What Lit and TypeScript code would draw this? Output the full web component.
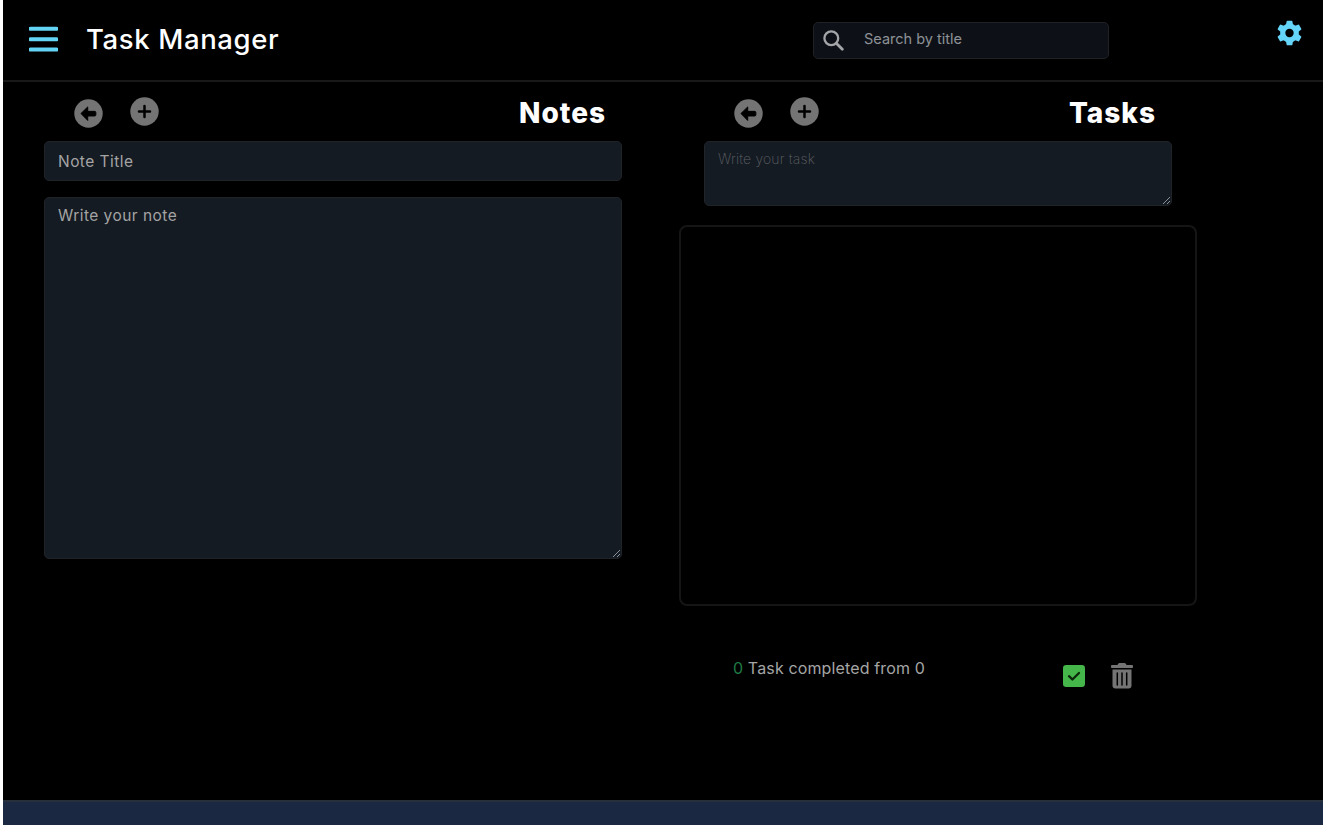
import { LitElement, html, css, svg } from "lit";
import { customElement, state } from "lit/decorators.js";

const backIcon = html`<svg class="round" viewBox="0 0 30 30" aria-hidden="true">
  <circle cx="15" cy="15" r="14.7" fill="#747474" />
  <path d="M7.2 15 14.2 8.2V12.8H21.3Q22.6 12.8 22.6 14V16.4Q22.6 17.6 21.3 17.6H14.2V22.2Z"
    fill="#000" stroke="#000" stroke-width="1" stroke-linejoin="round" />
</svg>`;

const addIcon = html`<svg class="round" viewBox="0 0 30 30" aria-hidden="true">
  <circle cx="15" cy="15" r="14.7" fill="#747474" />
  <path d="M15 9.3V20.7M9.3 15H20.7" fill="none" stroke="#000" stroke-width="2.6" stroke-linecap="round" />
</svg>`;

const grip = html`<svg class="grip" viewBox="0 0 9 9" aria-hidden="true">
  <path d="M1 8 8 1M5 8 8 5" stroke="#8b9096" stroke-width="1" fill="none" />
</svg>`;

const teeth = [0, 60, 120, 180, 240, 300].map(
  (a) => svg`<path d="M-3.6 -8 -2.8 -12Q-2.6 -12.3 -2 -12.3H2Q2.6 -12.3 2.8 -12L3.6 -8Z" transform="rotate(${a})" />`
);

@customElement("app-root")
export class AppRoot extends LitElement {
  @state() private done = 0;
  @state() private total = 0;

  static styles = css`
    :host {
      display: block;
      height: 825px;
      padding: 0 3px;
      box-sizing: border-box;
      overflow: hidden;
      background: #fff;
      font-family: Inter, "Liberation Sans", sans-serif;
      color: #fff;
    }
    * { box-sizing: border-box; }
    svg { display: block; }
    button { background: none; border: 0; padding: 0; margin: 0; }
    h1, h2, p { margin: 0; }
    .app { display: flex; flex-direction: column; height: 100%; background: #000; }
    header {
      display: flex;
      align-items: flex-start;
      height: 82px;
      border-bottom: 2px solid #191919;
    }
    .menu { margin: 26px 0 0 26px; }
    .menu svg { width: 29px; height: 26px; }
    h1 { margin: 22px 0 0 28px; width: 240px; font-size: 27.5px; line-height: 34px; font-weight: 500; letter-spacing: 0.62px; white-space: nowrap; }
    .search {
      display: flex;
      align-items: center;
      width: 296px;
      height: 37px;
      margin: 22px 0 0 auto;
      padding: 0 0 2px 9px;
      background: #0d1117;
      border: 1px solid #1f2124;
      border-radius: 5px;
    }
    .search svg { width: 21px; height: 21px; margin-top: 1px; }
    .search input { flex: 1; min-width: 0; margin: 0 0 2px 20px; font-size: 14.5px; letter-spacing: 0; }
    .settings { margin: 20px 21px 0 168px; }
    .settings svg { width: 25px; height: 26px; }
    input, textarea {
      display: block;
      background: none;
      border: 0;
      padding: 0;
      margin: 0;
      outline: 0;
      resize: none;
      color: #ddd;
      font-family: inherit;
    }
    ::placeholder { color: #a4a4a4; opacity: 1; }
    .search ::placeholder { color: #8e9196; }
    main { display: flex; flex: 1; align-items: flex-start; padding-left: 41px; }
    .notes { width: 578px; }
    .tasks { width: 517px; margin-left: 57px; }
    .bar { display: flex; align-items: flex-start; height: 59px; padding: 14px 16px 0 30px; }
    .bar button { margin-top: 3px; }
    .bar button + button { margin: 1px 0 0 27px; }
    .round { width: 29px; height: 29px; }
    h2 { margin-left: auto; font-size: 28px; line-height: 34px; font-weight: 800; letter-spacing: 1px; }
    .tasks .bar { padding: 14px 40px 0 55px; }
    .field { position: relative; background: #151b23; border: 1px solid #202429; border-radius: 5px; padding: 0 13px; }
    .field input, .field textarea { width: 100%; height: 100%; font-size: 15.5px; letter-spacing: 0.45px; }
    .title { height: 40px; }
    .body { height: 362px; margin-top: 16px; }
    .field textarea { padding-top: 8px; line-height: 20px; }
    .entry { height: 65px; margin: 0 24px 0 25px; }
    .field.entry textarea { padding-top: 7px; font-size: 14px; font-weight: 200; letter-spacing: 0.15px; }
    .entry ::placeholder { color: #5d6064; }
    .grip { position: absolute; right: 0; bottom: 0; width: 9px; height: 9px; }
    .list { height: 381px; margin: 19px -1px 0 0; border: 2px solid #151515; border-radius: 8px; }
    .status { display: flex; align-items: flex-start; margin-top: 50px; padding-left: 54px; }
    .status p { width: 330px; font-size: 16px; line-height: 24px; letter-spacing: 0.14px; color: #a5a5a5; white-space: nowrap; }
    .done { color: #1f7a45; }
    .complete svg { width: 22px; height: 22px; margin-top: 9px; }
    .remove svg { width: 22px; height: 26px; margin: 7px 0 0 26px; }
    footer { height: 25px; background: #1a2842; border-top: 2px solid #272f3b; }
  `;

  render() {
    return html`
      <div class="app">
        <header>
          <button class="menu" aria-label="Menu">
            <svg viewBox="0 0 29 26">
              <path d="M1.5 2.8H27.5M1.5 13.2H27.5M1.5 23.6H27.5" stroke="#64d4f4" stroke-width="4" stroke-linecap="round" />
            </svg>
          </button>
          <h1>Task Manager</h1>
          <label class="search">
            <svg viewBox="0 0 21 21">
              <circle cx="8.3" cy="8.3" r="6.9" fill="none" stroke="#a3a5a8" stroke-width="2.3" />
              <path d="M13.3 13.3 19.3 19.3" stroke="#a3a5a8" stroke-width="2.8" stroke-linecap="round" />
            </svg>
            <input type="text" placeholder="Search by title" />
          </label>
          <button class="settings" aria-label="Settings">
            <svg viewBox="-12.5 -13 25 26">
              <g fill="#64d4f8">${teeth}<circle r="9.4" /></g>
              <circle r="4.2" fill="#000" />
            </svg>
          </button>
        </header>
        <main>
          <section class="notes">
            <div class="bar">
              <button aria-label="Back">${backIcon}</button>
              <button aria-label="Add note">${addIcon}</button>
              <h2>Notes</h2>
            </div>
            <div class="field title"><input type="text" placeholder="Note Title" /></div>
            <div class="field body"><textarea placeholder="Write your note"></textarea>${grip}</div>
          </section>
          <section class="tasks">
            <div class="bar">
              <button aria-label="Back">${backIcon}</button>
              <button aria-label="Add task">${addIcon}</button>
              <h2>Tasks</h2>
            </div>
            <div class="field entry"><textarea placeholder="Write your task"></textarea>${grip}</div>
            <div class="list"></div>
            <div class="status">
              <p><span class="done">${this.done}</span> Task completed from ${this.total}</p>
              <button class="complete" aria-label="Complete all">
                <svg viewBox="0 0 22 22">
                  <rect width="22" height="22" rx="3.2" fill="#45b649" />
                  <path d="M6 11.2 9.4 14.5 16 8" fill="none" stroke="#0b260c" stroke-width="2.3" stroke-linecap="round" stroke-linejoin="round" />
                </svg>
              </button>
              <button class="remove" aria-label="Delete all">
                <svg viewBox="0 0 22 26">
                  <path d="M1 2H6.4L7.4.6Q7.8 0 8.5 0H13.5Q14.2 0 14.6.6L15.6 2H21Q22 2 22 3V4.2Q22 5 21 5H1Q0 5 0 4.2V3Q0 2 1 2Z" fill="#747474" />
                  <path d="M1.5 6.5H20.5V22.5Q20.5 25.5 17.5 25.5H4.5Q1.5 25.5 1.5 22.5Z" fill="#747474" />
                  <path d="M6.3 10V22M11 10V22M15.7 10V22" stroke="#000" stroke-width="1.5" stroke-linecap="round" />
                </svg>
              </button>
            </div>
          </section>
        </main>
        <footer></footer>
      </div>
    `;
  }
}
